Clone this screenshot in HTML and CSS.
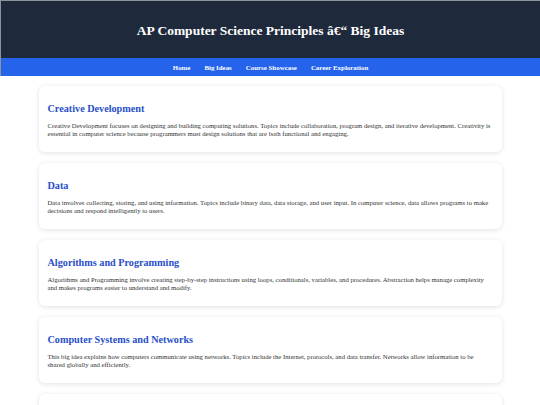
FILE: index.html
```html
<!DOCTYPE html>
<html>
<head>
	<meta charset="utf-8">
	<title>AP Computer Science Principles - Big Ideas</title>
	<link rel="stylesheet" href="styles.css">
</head>
<body>
<div class="top">
	<header class="masthead">
		<h1>AP Computer Science Principles â€“ Big Ideas</h1>
	</header>
	<nav class="menu">
		<a href="#">Home</a>
		<a href="#">Big Ideas</a>
		<a href="#">Course Showcase</a>
		<a href="#">Career Exploration</a>
	</nav>
</div>
<main class="wrap">
	<section class="card">
		<h2>Creative Development</h2>
		<p>Creative Development focuses on designing and building computing solutions. Topics include collaboration, program design, and iterative development. Creativity is essential in computer science because programmers must design solutions that are both functional and engaging.</p>
	</section>
	<section class="card">
		<h2>Data</h2>
		<p>Data involves collecting, storing, and using information. Topics include binary data, data storage, and user input. In computer science, data allows programs to make decisions and respond intelligently to users.</p>
	</section>
	<section class="card">
		<h2>Algorithms and Programming</h2>
		<p>Algorithms and Programming involve creating step-by-step instructions using loops, conditionals, variables, and procedures. Abstraction helps manage complexity and makes programs easier to understand and modify.</p>
	</section>
	<section class="card">
		<h2>Computer Systems and Networks</h2>
		<p>This big idea explains how computers communicate using networks. Topics include the Internet, protocols, and data transfer. Networks allow information to be shared globally and efficiently.</p>
	</section>
	<section class="card">
		<h2>Impact of Computing</h2>
		<p>Computing affects society, the economy, and culture. Topics include ethics, privacy, and the digital divide.</p>
	</section>
</main>
</body>
</html>
```

FILE: styles.css
```css
body{
	margin: 0;
	background: #fff;
	font-family: "Liberation Serif", "Times New Roman", serif;
	color: #333;
}
.top{
	border-top: 1px solid #8c939c;
	border-left: 1px solid #8c939c;
}
.masthead{
	background: #1e293b;
	color: #fff;
	height: 57px;
	display: flex;
	align-items: center;
	justify-content: center;
}
.masthead h1{
	margin: 2px 0 0;
	font-size: 13.5px;
	font-weight: bold;
}
.menu{
	background: #2563eb;
	height: 18px;
	display: flex;
	align-items: center;
	justify-content: center;
	gap: 14px;
}
.menu a{
	color: #fff;
	text-decoration: none;
	font-size: 6.9px;
	font-weight: bold;
}
.wrap{
	width: 463px;
	margin: 10px auto 0;
}
.card{
	background: #fff;
	border-radius: 6px;
	box-shadow: 0 1px 5px rgba(0, 0, 0, 0.12);
	padding: 9px;
	margin-bottom: 11px;
}
.card h2{
	margin: 8px 0 8px;
	font-size: 10.2px;
	color: #2850c8;
}
.card p{
	margin: 0 0 5px;
	font-size: 6.7px;
	line-height: 8px;
}
```
